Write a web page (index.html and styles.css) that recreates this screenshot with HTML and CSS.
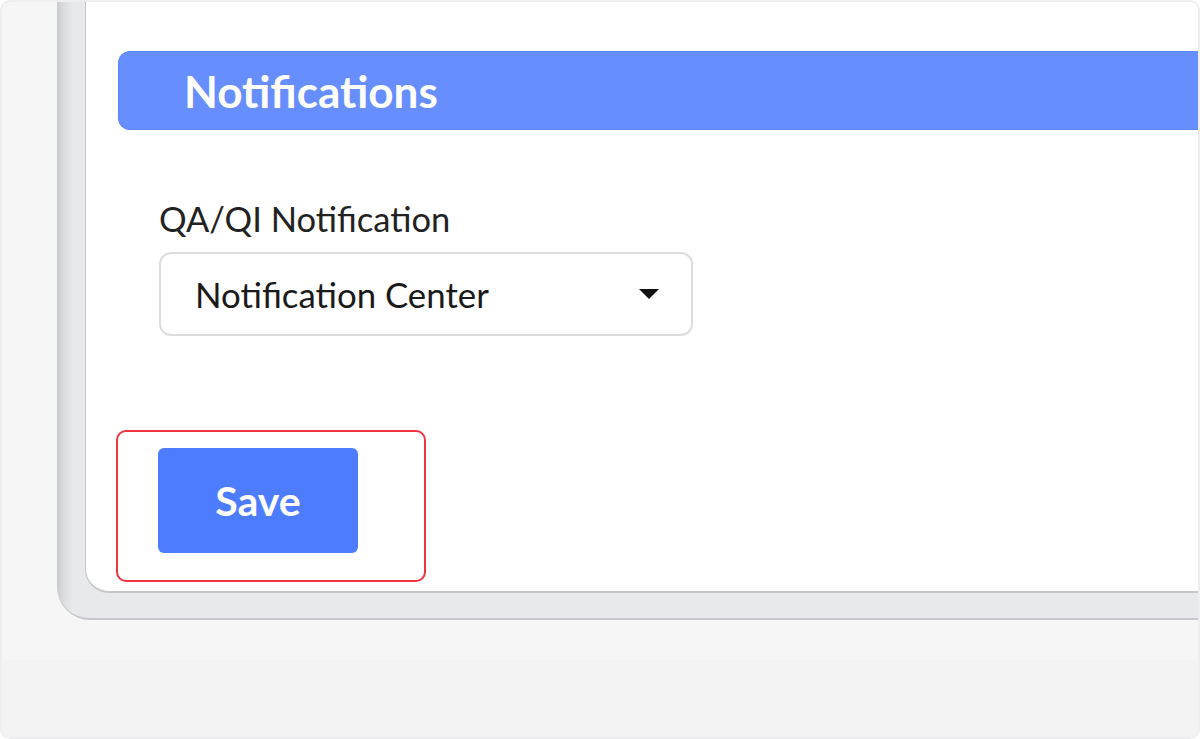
FILE: index.html
```html
<!DOCTYPE html>
<html lang="en">
  <head>
    <meta charset="UTF-8" />
    <title>Notification Settings</title>
    <link rel="stylesheet" href="styles.css">
  </head>
  <body>
    <div class="shot">
      <div class="upper">
        <div class="panel">
          <div class="card">
            <div class="section-bar">Notifications</div>

            <div class="field">
              <label class="field-label" for="qaNotify">QA/QI Notification</label>
              <div class="select" id="qaNotify">
                <span>Notification Center</span>
                <span class="caret"></span>
              </div>
            </div>

            <div class="highlight">
              <button class="save-button">Save</button>
            </div>
          </div>
        </div>
      </div>
      <div class="lower"></div>
    </div>
  </body>
</html>
```

FILE: styles.css
```css
body {
  margin: 0;
  font-family: "Lato", "Open Sans", sans-serif;
  background: #ffffff;
}

.shot {
  width: 1200px;
  height: 739px;
  box-sizing: border-box;
  border: 2px solid #eeeef1;
  border-radius: 10px;
  overflow: hidden;
  background: #f6f6f7;
}

.upper {
  height: 658px;
  padding-left: 55px;
  background: #f6f6f7;
}

.lower {
  height: 77px;
  background: #f3f3f3;
}

.panel {
  height: 618px;
  box-sizing: border-box;
  padding-left: 28px;
  background: linear-gradient(to right, #c9cacd 0, #dcdde0 7px, #e8e9ec 16px);
  border-bottom: 2px solid #c8c8ca;
  border-bottom-left-radius: 33px;
}

.card {
  height: 591px;
  box-sizing: border-box;
  margin-right: -40px;
  padding: 49px 0 0 32px;
  background: #ffffff;
  border-left: 1px solid #c4c4c6;
  border-bottom: 2px solid #c6c6c8;
  border-bottom-left-radius: 24px;
}

.section-bar {
  height: 79px;
  box-sizing: border-box;
  display: flex;
  align-items: center;
  padding-left: 65px;
  background: #668efe;
  border: 1px solid #5c87fd;
  border-right: none;
  border-radius: 12px 0 0 12px;
  color: #ffffff;
  font-size: 44px;
  font-weight: 700;
}

.field {
  margin-left: 41px;
}

.field-label {
  display: block;
  margin-top: 69px;
  font-size: 34.5px;
  line-height: 40px;
  color: #222222;
}

.select {
  width: 534px;
  height: 84px;
  box-sizing: border-box;
  margin-top: 13px;
  display: flex;
  align-items: center;
  justify-content: space-between;
  padding: 0 32px 0 34px;
  border: 2px solid #dcdcde;
  border-radius: 12px;
  font-size: 34.8px;
  color: #1a1a1a;
}

.caret {
  width: 0;
  height: 0;
  border-left: 10px solid transparent;
  border-right: 10px solid transparent;
  border-top: 10px solid #111111;
}

.highlight {
  display: inline-block;
  margin: 94px 0 0 -2px;
  padding: 16px 66px 27px 40px;
  border: 2px solid #ef3341;
  border-radius: 10px;
}

.save-button {
  display: block;
  width: 200px;
  height: 105px;
  border: none;
  border-radius: 6px;
  background: #4e7cfe;
  color: #ffffff;
  font-family: "Lato", sans-serif;
  font-size: 41px;
  font-weight: 700;
}
```
